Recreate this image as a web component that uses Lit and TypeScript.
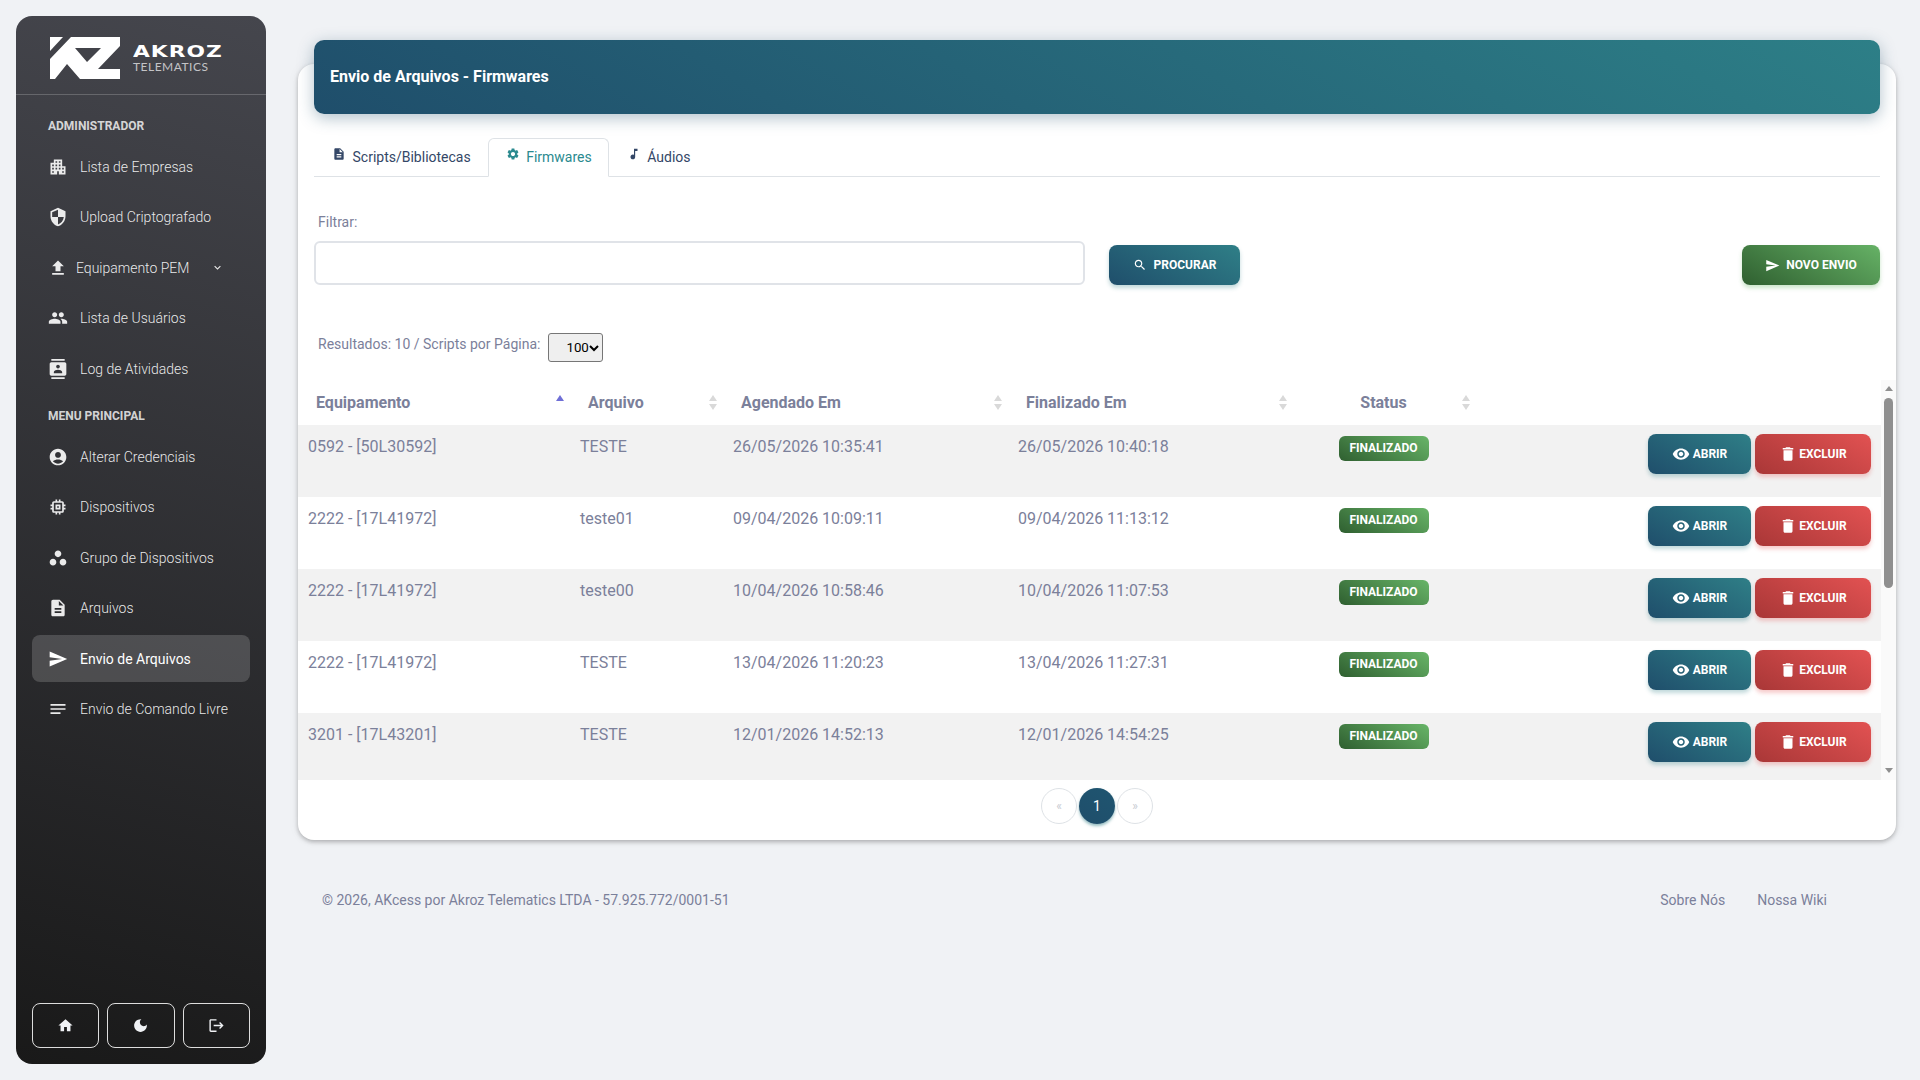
import { LitElement, html, css } from "lit";
import { customElement } from "lit/decorators.js";

const ICONS: Record<string, string> = {
  apartment: "M17 11V3H7v4H3v14h8v-4h2v4h8V11h-4zM7 19H5v-2h2v2zm0-4H5v-2h2v2zm0-4H5V9h2v2zm4 4H9v-2h2v2zm0-4H9V9h2v2zm0-4H9V5h2v2zm4 8h-2v-2h2v2zm0-4h-2V9h2v2zm0-4h-2V5h2v2zm4 12h-2v-2h2v2zm0-4h-2v-2h2v2z",
  security: "M12 1L3 5v6c0 5.55 3.84 10.74 9 12 5.16-1.26 9-6.45 9-12V5l-9-4zm0 10.99h7c-.53 4.12-3.28 7.79-7 8.94V12H5V6.3l7-3.11v8.8z",
  upload: "M9 16h6v-6h4l-7-7-7 7h4zm-4 2h14v2H5z",
  people: "M16 11c1.66 0 2.99-1.34 2.99-3S17.66 5 16 5c-1.66 0-3 1.34-3 3s1.34 3 3 3zm-8 0c1.66 0 2.99-1.34 2.99-3S9.66 5 8 5C6.34 5 5 6.34 5 8s1.34 3 3 3zm0 2c-2.33 0-7 1.17-7 3.5V19h14v-2.5c0-2.33-4.67-3.5-7-3.5zm8 0c-.29 0-.62.02-.97.05 1.16.84 1.97 1.97 1.97 3.45V19h6v-2.5c0-2.33-4.67-3.5-7-3.5z",
  contacts: "M20 0H4v2h16V0zM4 24h16v-2H4v2zM20 4H4c-1.1 0-2 .9-2 2v12c0 1.1.9 2 2 2h16c1.1 0 2-.9 2-2V6c0-1.1-.9-2-2-2zm-8 2.75c1.24 0 2.25 1.01 2.25 2.25s-1.01 2.25-2.25 2.25S9.75 10.24 9.75 9 10.76 6.75 12 6.75zM17 17H7v-1.5c0-1.67 3.33-2.5 5-2.5s5 .83 5 2.5V17z",
  account: "M12 2C6.48 2 2 6.48 2 12s4.48 10 10 10 10-4.48 10-10S17.52 2 12 2zm0 4c1.93 0 3.5 1.57 3.5 3.5S13.93 13 12 13s-3.5-1.57-3.5-3.5S10.07 6 12 6zm0 14c-2.03 0-4.43-.82-6.14-2.88C7.55 15.8 9.68 15 12 15s4.45.8 6.14 2.12C16.43 19.18 14.03 20 12 20z",
  memory: "M15 9H9v6h6V9zm-2 4h-2v-2h2v2zm8-2V9h-2V7c0-1.1-.9-2-2-2h-2V3h-2v2h-2V3H9v2H7c-1.1 0-2 .9-2 2v2H3v2h2v2H3v2h2v2c0 1.1.9 2 2 2h2v2h2v-2h2v2h2v-2h2c1.1 0 2-.9 2-2v-2h2v-2h-2v-2h2zm-4 6H7V7h10v10z",
  workspaces: "M6 13c-2.2 0-4 1.8-4 4s1.8 4 4 4 4-1.8 4-4-1.8-4-4-4zm6-10C9.8 3 8 4.8 8 7s1.8 4 4 4 4-1.8 4-4-1.8-4-4-4zm6 10c-2.2 0-4 1.8-4 4s1.8 4 4 4 4-1.8 4-4-1.8-4-4-4z",
  description: "M14 2H6c-1.1 0-1.99.9-1.99 2L4 20c0 1.1.89 2 1.99 2H18c1.1 0 2-.9 2-2V8l-6-6zm2 16H8v-2h8v2zm0-4H8v-2h8v2zm-3-5V3.5L18.5 9H13z",
  send: "M2.01 21L23 12 2.01 3 2 10l15 2-15 2z",
  notes: "M3 18h12v-2H3v2zM3 6v2h18V6H3zm0 7h18v-2H3v2z",
  home: "M10 20v-6h4v6h5v-8h3L12 3 2 12h3v8z",
  moon: "M12 3c-4.97 0-9 4.03-9 9s4.03 9 9 9 9-4.03 9-9c0-.46-.04-.92-.1-1.36-.98 1.37-2.58 2.26-4.4 2.26-2.98 0-5.4-2.42-5.4-5.4 0-1.81.89-3.42 2.26-4.4-.44-.06-.9-.1-1.36-.1z",
  logout: "M17 7l-1.41 1.41L18.17 11H8v2h10.17l-2.58 2.58L17 17l5-5zM4 5h8V3H4c-1.1 0-2 .9-2 2v14c0 1.1.9 2 2 2h8v-2H4V5z",
  settings: "M19.14 12.94c.04-.3.06-.61.06-.94 0-.32-.02-.64-.07-.94l2.03-1.58c.18-.14.23-.41.12-.61l-1.92-3.32c-.12-.22-.37-.29-.59-.22l-2.39.96c-.5-.38-1.03-.7-1.62-.94l-.36-2.54c-.04-.24-.24-.41-.48-.41h-3.84c-.24 0-.43.17-.47.41l-.36 2.54c-.59.24-1.13.57-1.62.94l-2.39-.96c-.22-.08-.47 0-.59.22L2.74 8.87c-.12.21-.08.47.12.61l2.03 1.58c-.05.3-.09.63-.09.94s.02.64.07.94l-2.03 1.58c-.18.14-.23.41-.12.61l1.92 3.32c.12.22.37.29.59.22l2.39-.96c.5.38 1.03.7 1.62.94l.36 2.54c.05.24.24.41.48.41h3.84c.24 0 .44-.17.47-.41l.36-2.54c.59-.24 1.13-.56 1.62-.94l2.39.96c.22.08.47 0 .59-.22l1.92-3.32c.12-.22.07-.47-.12-.61l-2.01-1.58zM12 15.6c-1.98 0-3.6-1.62-3.6-3.6s1.62-3.6 3.6-3.6 3.6 1.62 3.6 3.6-1.62 3.6-3.6 3.6z",
  music: "M12 3v10.55c-.59-.34-1.27-.55-2-.55-2.21 0-4 1.79-4 4s1.79 4 4 4 4-1.79 4-4V7h4V3h-6z",
  search: "M15.5 14h-.79l-.28-.27C15.41 12.59 16 11.11 16 9.5 16 5.91 13.09 3 9.5 3S3 5.91 3 9.5 5.91 16 9.5 16c1.61 0 3.09-.59 4.23-1.57l.27.28v.79l5 4.99L20.49 19l-4.99-5zm-6 0C7.01 14 5 11.99 5 9.5S7.01 5 9.5 5 14 7.01 14 9.5 11.99 14 9.5 14z",
  eye: "M12 4.5C7 4.5 2.73 7.61 1 12c1.73 4.39 6 7.5 11 7.5s9.27-3.11 11-7.5c-1.73-4.39-6-7.5-11-7.5zM12 17c-2.76 0-5-2.24-5-5s2.24-5 5-5 5 2.24 5 5-2.24 5-5 5zm0-8c-1.66 0-3 1.34-3 3s1.34 3 3 3 3-1.34 3-3-1.34-3-3-3z",
  trash: "M6 19c0 1.1.9 2 2 2h8c1.1 0 2-.9 2-2V7H6v12zM19 4h-3.5l-1-1h-5l-1 1H5v2h14V4z",
  chevron: "M16.59 8.59L12 13.17 7.41 8.59 6 10l6 6 6-6z",
};

const icon = (name: string) => html`<svg class="ic" viewBox="0 0 24 24"><path d=${ICONS[name]}></path></svg>`;

const adminMenu = [
  ["apartment", "Lista de Empresas"],
  ["security", "Upload Criptografado"],
  ["upload", "Equipamento PEM"],
  ["people", "Lista de Usuários"],
  ["contacts", "Log de Atividades"],
];

const mainMenu = [
  ["account", "Alterar Credenciais"],
  ["memory", "Dispositivos"],
  ["workspaces", "Grupo de Dispositivos"],
  ["description", "Arquivos"],
  ["send", "Envio de Arquivos"],
  ["notes", "Envio de Comando Livre"],
];

const rows = [
  ["0592 - [50L30592]", "TESTE", "26/05/2026 10:35:41", "26/05/2026 10:40:18"],
  ["2222 - [17L41972]", "teste01", "09/04/2026 10:09:11", "09/04/2026 11:13:12"],
  ["2222 - [17L41972]", "teste00", "10/04/2026 10:58:46", "10/04/2026 11:07:53"],
  ["2222 - [17L41972]", "TESTE", "13/04/2026 11:20:23", "13/04/2026 11:27:31"],
  ["3201 - [17L43201]", "TESTE", "12/01/2026 14:52:13", "12/01/2026 14:54:25"],
];

@customElement("app-root")
export class AppRoot extends LitElement {
  static styles = css`
    :host {
      display: flex;
      width: 1920px;
      height: 1080px;
      overflow: hidden;
      background: #f0f2f5;
      font-family: Roboto, "Liberation Sans", sans-serif;
      color: #7b809a;
      font-size: 14px;
    }
    * { box-sizing: border-box; }
    .ic { display: block; width: 20px; height: 20px; fill: currentColor; flex: none; }

    /* sidebar */
    .sidebar {
      width: 250px;
      height: 1048px;
      margin: 16px 0 16px 16px;
      flex: none;
      display: flex;
      flex-direction: column;
      border-radius: 16px;
      background: linear-gradient(195deg, #45464d, #191919);
      color: #fff;
    }
    .brand {
      height: 79px;
      flex: none;
      padding: 21px 0 0 34px;
      display: flex;
      gap: 13px;
      border-bottom: 1px solid rgba(255, 255, 255, 0.2);
    }
    .brand svg { width: 70px; height: 42px; fill: #fff; flex: none; }
    .brand-text { display: flex; flex-direction: column; padding-top: 6px; }
    .brand-name {
      font-family: "DejaVu Sans", sans-serif;
      font-weight: 700;
      font-size: 15px;
      line-height: 18px;
      letter-spacing: 0.7px;
      transform: scaleX(1.45);
      transform-origin: left;
      white-space: nowrap;
    }
    .brand-sub {
      margin-top: -1px;
      font-family: Lato, sans-serif;
      font-size: 12px;
      line-height: 14px;
      letter-spacing: 0.5px;
      color: #c4c4c7;
      white-space: nowrap;
    }
    nav { padding-top: 7px; }
    .section {
      height: 24px;
      line-height: 24px;
      margin: 12px 0 5.5px;
      padding-left: 32px;
      font-size: 12px;
      font-weight: 700;
      color: rgba(255, 255, 255, 0.8);
    }
    .item {
      height: 47px;
      margin: 0 16px 3.4px;
      padding-left: 16px;
      display: flex;
      align-items: center;
      gap: 12px;
      border-radius: 8px;
      font-weight: 300;
      color: rgba(255, 255, 255, 0.9);
      white-space: nowrap;
    }
    .item.pem { gap: 8px; }
    .item .caret { width: 13px; height: 13px; margin-left: 14px; }
    .item.active { background: rgba(255, 255, 255, 0.17); font-weight: 400; color: #fff; }
    .side-actions {
      margin-top: auto;
      padding: 0 16px 16px;
      display: flex;
      gap: 8px;
    }
    .side-actions div {
      flex: 1;
      height: 45px;
      display: flex;
      align-items: center;
      justify-content: center;
      border: 1px solid rgba(255, 255, 255, 0.85);
      border-radius: 8px;
      color: #f0f2f5;
    }
    .side-actions .ic { width: 17px; height: 17px; }

    /* main */
    main { flex: 1; min-width: 0; padding: 64px 24px 0 32px; display: flex; flex-direction: column; }
    .card {
      height: 776px;
      flex: none;
      background: #fff;
      border-radius: 16px;
      box-shadow: 0 2px 4px rgba(0, 0, 0, 0.25), 0 0 12px rgba(0, 0, 0, 0.06);
      display: flex;
      flex-direction: column;
    }
    .card-head {
      height: 74px;
      margin: -24px 16px 0;
      flex: none;
      padding: 0 0 2px 16px;
      display: flex;
      align-items: center;
      border-radius: 10px;
      background: linear-gradient(30deg, #1f4e6b, #2d7f87);
      box-shadow: 0 4px 16px rgba(31, 78, 107, 0.35);
      color: #fff;
      font-size: 16px;
      font-weight: 700;
    }
    .tabs {
      margin: 24px 16px 0;
      height: 39px;
      flex: none;
      display: flex;
      border-bottom: 1px solid #dee2e6;
      color: #344767;
    }
    .tab {
      height: 39px;
      padding: 0 16px 2px 17px;
      display: flex;
      align-items: center;
      gap: 6.5px;
      border: 1px solid transparent;
      border-top-left-radius: 6px;
      border-top-right-radius: 6px;
    }
    .tab .ic { width: 14px; height: 14px; margin-top: -6px; }
    .tab.active { background: #fff; border-color: #dee2e6 #dee2e6 #fff; color: #2b8a8f; }
    .filter-label { margin: 35px 20px 0; height: 20px; line-height: 20px; flex: none; }
    .filter {
      margin: 9px 16px 0;
      flex: none;
      display: flex;
      align-items: flex-end;
      gap: 24px;
    }
    .filter input {
      width: 771px;
      height: 44px;
      border: 2px solid #e0e3e8;
      border-radius: 6px;
      background: #fff;
      outline: none;
    }
    .btn {
      height: 40px;
      display: inline-flex;
      align-items: center;
      justify-content: center;
      gap: 6px;
      border-radius: 8px;
      color: #fff;
      font-size: 12px;
      font-weight: 700;
      text-transform: uppercase;
    }
    .btn .ic { width: 14px; height: 14px; }
    .primary {
      background: linear-gradient(30deg, #1f4e6b, #2f7f87);
      box-shadow: 0 3px 4px rgba(45, 125, 133, 0.3);
    }
    .success {
      background: linear-gradient(30deg, #2f5f30, #66b266);
      box-shadow: 0 3px 4px rgba(80, 170, 80, 0.3);
    }
    .danger {
      background: linear-gradient(30deg, #a93737, #e25252);
      box-shadow: 0 3px 4px rgba(226, 82, 82, 0.3);
    }
    .search { width: 131px; }
    .search .ic { margin-right: 1px; }
    .new { width: 138px; margin-left: auto; }
    .new .ic { width: 15px; height: 15px; }
    .results {
      margin: 48px 20px 0;
      height: 29px;
      flex: none;
      display: flex;
      align-items: center;
      gap: 8px;
    }
    .results span { margin-top: -7px; }
    .per-page { position: relative; width: 55px; height: 29px; }
    .per-page select {
      appearance: none;
      width: 100%;
      height: 100%;
      padding: 0 0 0 17px;
      font-family: inherit;
      font-size: 13.33px;
      color: #000;
      background: #efefef;
      border: 1px solid #767676;
      border-radius: 3px;
    }
    .per-page svg {
      position: absolute;
      right: 4px;
      top: 12px;
      width: 10px;
      height: 7px;
      fill: none;
      stroke: #000;
      stroke-width: 2;
      pointer-events: none;
    }

    /* table */
    .table-area { margin-top: 18px; height: 400px; flex: none; display: flex; }
    .table-view { width: 1583px; flex: none; overflow: hidden; }
    .scrollbar {
      width: 15px;
      flex: none;
      display: flex;
      flex-direction: column;
      align-items: center;
      background: #fafafa;
    }
    .arrow { width: 0; height: 0; border-left: 4.5px solid transparent; border-right: 4.5px solid transparent; }
    .arrow.up { margin-top: 6px; border-bottom: 5px solid #8f8f8f; }
    .arrow.down { margin-top: auto; margin-bottom: 7px; border-top: 5px solid #8f8f8f; }
    .thumb { width: 9px; height: 190px; margin-top: 7px; border-radius: 5px; background: #8f8f8f; }
    table { width: 100%; border-collapse: collapse; table-layout: fixed; font-size: 16px; }
    th {
      position: relative;
      height: 45px;
      padding: 0 0 0 18px;
      text-align: left;
      font-weight: 700;
      color: #7b809a;
    }
    th:nth-child(1) { width: 272px; }
    th:nth-child(2) { width: 153px; }
    th:nth-child(3) { width: 285px; }
    th:nth-child(4) { width: 285px; }
    th:nth-child(5) { width: 183px; }
    th.center { text-align: center; padding: 0 2px 0 0; }
    .sort {
      position: absolute;
      right: 6px;
      top: 15px;
      display: flex;
      flex-direction: column;
      gap: 3px;
    }
    .sort i {
      display: block;
      width: 0;
      height: 0;
      border-left: 4px solid transparent;
      border-right: 4px solid transparent;
    }
    .sort .up { border-bottom: 6px solid #d9d9d9; }
    .sort .down { border-top: 6px solid #d9d9d9; }
    .sort.asc .up { border-bottom-color: #6f6fd6; }
    .sort.asc .down { border-top-color: transparent; }
    td { height: 72px; padding: 10px 0 0 10px; vertical-align: top; line-height: 24px; }
    tbody tr:nth-child(odd) { background: #f2f2f2; }
    .badge {
      display: inline-block;
      height: 25px;
      width: 90px;
      margin-top: 1px;
      line-height: 25px;
      text-align: center;
      border-radius: 6px;
      color: #fff;
      font-size: 12px;
      font-weight: 700;
      background: linear-gradient(30deg, #2f5f30, #68b568);
    }
    td.status { padding-left: 0; padding-right: 2px; text-align: center; }
    td.actions { padding: 9px 10px 0 0; }
    .actions-wrap { display: flex; justify-content: flex-end; gap: 4px; }
    .open { width: 103px; gap: 3px; }
    .open .ic { width: 18px; height: 18px; }
    .remove { width: 116px; gap: 2px; }
    .remove .ic { width: 18px; height: 18px; }

    .pages {
      margin-top: 8px;
      flex: none;
      display: flex;
      justify-content: center;
      gap: 2px;
    }
    .pages div {
      width: 36px;
      height: 36px;
      display: flex;
      align-items: center;
      justify-content: center;
      border: 1px solid #dee2e6;
      border-radius: 50%;
      color: #c8cbd2;
      font-size: 12px;
    }
    .pages .current {
      border: none;
      background: linear-gradient(30deg, #1f4e6b, #1f5570);
      box-shadow: 0 2px 3px rgba(45, 125, 133, 0.5);
      color: #fff;
      font-size: 14px;
    }

    footer {
      margin: 50px 69px 0 24px;
      display: flex;
      justify-content: space-between;
      line-height: 20px;
    }
    .links { display: flex; gap: 32px; }
  `;

  private navItem(i: string, label: string) {
    const pem = label === "Equipamento PEM";
    const active = label === "Envio de Arquivos";
    return html`<div class="item ${pem ? "pem" : ""} ${active ? "active" : ""}">
      ${icon(i)}<span>${label}</span>
      ${pem ? html`<svg class="ic caret" viewBox="0 0 24 24"><path d=${ICONS.chevron}></path></svg>` : ""}
    </div>`;
  }

  private sortHead(label: string, asc = false, center = false) {
    return html`<th class=${center ? "center" : ""}>
      ${label}<span class="sort ${asc ? "asc" : ""}"><i class="up"></i><i class="down"></i></span>
    </th>`;
  }

  render() {
    return html`
      <aside class="sidebar">
        <div class="brand">
          <svg viewBox="0 0 70 42">
            <polygon points="0,0 13,0 0,14"></polygon>
            <path fill-rule="evenodd" d="M0 22 L21 0 H70 V9 L48 32 H70 V42 H30 L17 27 L5 42 H0 Z M25 11 L37 25 L51 11 Z"></path>
          </svg>
          <div class="brand-text">
            <span class="brand-name">AKROZ</span>
            <span class="brand-sub">TELEMATICS</span>
          </div>
        </div>
        <nav>
          <div class="section">ADMINISTRADOR</div>
          ${adminMenu.map(([i, t]) => this.navItem(i, t))}
          <div class="section">MENU PRINCIPAL</div>
          ${mainMenu.map(([i, t]) => this.navItem(i, t))}
        </nav>
        <div class="side-actions">
          <div>${icon("home")}</div>
          <div>${icon("moon")}</div>
          <div>${icon("logout")}</div>
        </div>
      </aside>
      <main>
        <section class="card">
          <div class="card-head">Envio de Arquivos - Firmwares</div>
          <div class="tabs">
            <div class="tab">${icon("description")}Scripts/Bibliotecas</div>
            <div class="tab active">${icon("settings")}Firmwares</div>
            <div class="tab">${icon("music")}Áudios</div>
          </div>
          <div class="filter-label">Filtrar:</div>
          <div class="filter">
            <input type="text" />
            <div class="btn primary search">${icon("search")}Procurar</div>
            <div class="btn success new">${icon("send")}Novo Envio</div>
          </div>
          <div class="results">
            <span>Resultados: 10 / Scripts por Página:</span>
            <div class="per-page">
              <select><option>100</option></select>
              <svg viewBox="0 0 10 7"><path d="M1 1l4 4 4-4"></path></svg>
            </div>
          </div>
          <div class="table-area">
            <div class="table-view">
              <table>
                <thead>
                  <tr>
                    ${this.sortHead("Equipamento", true)}
                    ${this.sortHead("Arquivo")}
                    ${this.sortHead("Agendado Em")}
                    ${this.sortHead("Finalizado Em")}
                    ${this.sortHead("Status", false, true)}
                    <th></th>
                  </tr>
                </thead>
                <tbody>
                  ${rows.map(
                    (r) => html`<tr>
                      ${r.map((c) => html`<td>${c}</td>`)}
                      <td class="status"><span class="badge">FINALIZADO</span></td>
                      <td class="actions">
                        <div class="actions-wrap">
                          <div class="btn primary open">${icon("eye")}Abrir</div>
                          <div class="btn danger remove">${icon("trash")}Excluir</div>
                        </div>
                      </td>
                    </tr>`
                  )}
                </tbody>
              </table>
            </div>
            <div class="scrollbar">
              <div class="arrow up"></div>
              <div class="thumb"></div>
              <div class="arrow down"></div>
            </div>
          </div>
          <div class="pages">
            <div>«</div>
            <div class="current">1</div>
            <div>»</div>
          </div>
        </section>
        <footer>
          <span>© 2026, AKcess por Akroz Telematics LTDA - 57.925.772/0001-51</span>
          <div class="links"><span>Sobre Nós</span><span>Nossa Wiki</span></div>
        </footer>
      </main>
    `;
  }
}
